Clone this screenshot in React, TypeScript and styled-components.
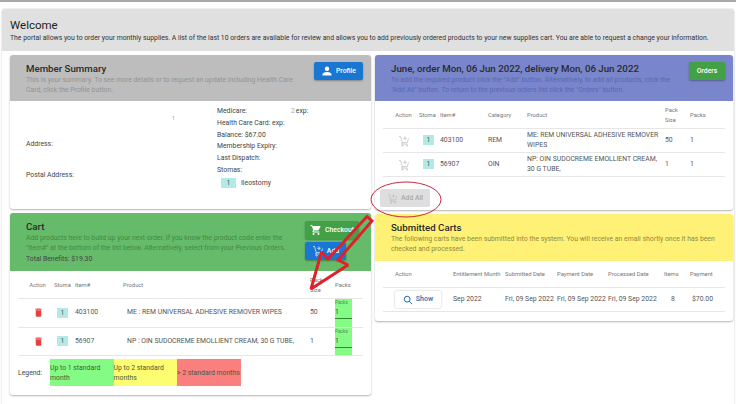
import React from "react";
import styled, { createGlobalStyle } from "styled-components";

const Global = createGlobalStyle`
  html, body { margin: 0; padding: 0; background: #fff; overflow: hidden; }
  body { font-family: Roboto, "Liberation Sans", sans-serif; color: rgba(0,0,0,.8); }
  * { box-sizing: border-box; }
`;

const Page = styled.div`
  position: relative;
  width: 736px;
  height: 404px;
  overflow: hidden;
  border-top: 2px solid #a8a8a8;
  padding: 7px 2px 0;
`;
const Shell = styled.div`
  border-radius: 3px;
  box-shadow: 0 0 2px rgba(0,0,0,.25);
  height: 400px;
`;
const Banner = styled.div`
  background: #e0e0e0;
  height: 42px;
  padding: 10px 8px 0;
  border-radius: 3px 3px 0 0;
`;
const PageTitle = styled.div`
  font-size: 11.5px;
  line-height: 13px;
  color: #222;
`;
const PageText = styled.div`
  font-size: 6.83px;
  line-height: 9px;
  margin-top: 2px;
  white-space: nowrap;
  color: #333;
`;
const Columns = styled.div`
  display: grid;
  grid-template-columns: 361px 358px;
  gap: 4px;
  padding: 4px 0 0 8px;
  align-items: start;
`;
const Stack = styled.div`
  display: flex;
  flex-direction: column;
  gap: 4px;
`;
const Card = styled.section<{ $h: number }>`
  height: ${p => p.$h}px;
  background: #fff;
  border-radius: 3px;
  box-shadow: 0 1px 2px rgba(0,0,0,.3);
`;
const CardHead = styled.header<{ $bg: string; $h: number }>`
  background: ${p => p.$bg};
  height: ${p => p.$h}px;
  border-radius: 3px 3px 0 0;
  padding: 7px 8px 0 16px;
  display: flex;
  justify-content: space-between;
  align-items: flex-start;
`;
const HeadText = styled.div<{ $w: number }>`
  width: ${p => p.$w}px;
`;
const CardTitle = styled.h2`
  margin: 0;
  font-size: 9.7px;
  line-height: 13px;
  font-weight: 500;
  color: #2a2a2a;
  white-space: nowrap;
`;
const CardSub = styled.p<{ $c: string }>`
  margin: 0;
  font-size: 6.85px;
  line-height: 10px;
  color: ${p => p.$c};
`;
const Benefits = styled.p`
  margin: 1px 0 0;
  font-size: 6.85px;
  line-height: 10px;
  color: #444;
`;
const HeadButtons = styled.div`
  display: flex;
  flex-direction: column;
  gap: 3px;
  margin: 1px 4px 0 0;
`;
const Btn = styled.div<{ $bg: string; $w: number }>`
  background: ${p => p.$bg};
  width: ${p => p.$w}px;
  height: 18px;
  border-radius: 2px;
  box-shadow: 0 1px 2px rgba(0,0,0,.3);
  color: #fff;
  font-size: 6.85px;
  font-weight: 500;
  display: flex;
  align-items: center;
  justify-content: center;
  gap: 3px;
`;
const Summary = styled.div`
  display: grid;
  grid-template-columns: 191px 1fr;
  padding: 5px 16px 0;
  font-size: 6.85px;
  color: #444;
`;
const AddressCol = styled.div`
  position: relative;
  padding-top: 34px;
  display: flex;
  flex-direction: column;
  gap: 23px;
`;
const StrayMark = styled.span`
  position: absolute;
  left: 146px;
  top: 9px;
  color: #999;
  font-size: 5px;
`;
const InfoCol = styled.div`
  display: flex;
  flex-direction: column;
`;
const InfoLine = styled.div`
  line-height: 11.8px;
  display: flex;
`;
const ExpGap = styled.span`
  margin-left: 44px;
`;
const Faint = styled.span`
  color: #aaa;
  margin-right: 1px;
`;
const StomaRow = styled.div`
  display: flex;
  align-items: center;
  gap: 5px;
  padding-left: 4px;
  line-height: 12px;
`;
const StomaTag = styled.span<{ $w: number; $ml?: number }>`
  display: inline-block;
  background: #b2ebe6;
  width: ${p => p.$w}px;
  margin-left: ${p => p.$ml ?? 0}px;
  height: 10px;
  line-height: 10px;
  text-align: center;
  font-size: 6.85px;
  color: #555;
`;
const Table = styled.div`
  padding: 0 8px;
`;
const Row = styled.div<{ $cols: string; $h: number }>`
  display: grid;
  grid-template-columns: ${p => p.$cols};
  height: ${p => p.$h}px;
  align-items: center;
  border-bottom: 1px solid #e6e6e6;
  font-size: 6.85px;
  line-height: 9.5px;
  color: #555;
`;
const HeadRow = styled(Row)`
  font-size: 5.8px;
  line-height: 10px;
  color: #777;
`;
const Centre = styled.div<{ $pl: number }>`
  display: flex;
  justify-content: center;
  padding-left: ${p => p.$pl}px;
`;
const Narrow = styled.div`
  width: min-content;
`;
const Inset = styled.div<{ $pl: number }>`
  padding-left: ${p => p.$pl}px;
`;
const AddAllWrap = styled.div`
  padding: 12px 5px 0;
`;
const AddAll = styled.div`
  width: 50px;
  height: 18px;
  background: #dedede;
  border-radius: 2px;
  color: #a8a8a8;
  font-size: 6.85px;
  font-weight: 500;
  display: flex;
  align-items: center;
  justify-content: center;
  gap: 3px;
`;
const Packs = styled.div`
  background: #84fb84;
  width: 17px;
  height: 100%;
  font-size: 4.8px;
  line-height: 7px;
  color: #5a8a5a;
`;
const PacksValue = styled.div`
  font-size: 6.85px;
  line-height: 10px;
  height: 12px;
  color: #444;
  border-bottom: 1px solid #2d8a2d;
  margin-top: 1px;
`;
const Legend = styled.div`
  display: flex;
  align-items: center;
  padding: 3px 0 0 8px;
  font-size: 6.85px;
  color: #444;
`;
const LegendLabel = styled.div`
  width: 24px;
  margin-right: 8px;
`;
const LegendCell = styled.div<{ $bg: string }>`
  width: 63.5px;
  height: 27px;
  background: ${p => p.$bg};
  line-height: 10px;
  display: flex;
  align-items: center;
  color: #4a5a3a;
`;
const ShowBtn = styled.div`
  width: 46px;
  height: 17px;
  border-radius: 2px;
  box-shadow: 0 0 2px rgba(0,0,0,.3);
  color: #1f6fb5;
  font-size: 7px;
  font-weight: 500;
  display: flex;
  align-items: center;
  justify-content: center;
  gap: 3px;
  margin-left: 12px;
`;
const Overlay = styled.svg`
  position: absolute;
  inset: 0;
  pointer-events: none;
`;

const CartIcon = ({ s, c, plus }: { s: number; c: string; plus?: boolean }) => (
  <svg width={s} height={s} viewBox="0 0 24 24" fill={plus ? "none" : c} stroke={plus ? c : "none"} strokeWidth={plus ? 1.3 : 0}>
    {plus ? (
      <>
        <path d="M2 3h3l3.5 12h10l2.5-8" />
        <path d="M8.5 15l-1.5 3h12" />
        <circle cx="9" cy="21" r="1.4" />
        <circle cx="18" cy="21" r="1.4" />
        <path d="M14 3v7M10.5 6.5h7" />
      </>
    ) : (
      <path d="M7 18a2 2 0 1 0 0 4 2 2 0 0 0 0-4zM1 2v2h2l3.6 7.6L5.2 14c-.1.3-.2.7-.2 1 0 1.1.9 2 2 2h12v-2H7.4c-.1 0-.2-.1-.2-.2l.9-1.8h7.4c.8 0 1.4-.4 1.8-1l3.6-6.5c.1-.2.1-.3.1-.5 0-.6-.4-1-1-1H5.2l-.9-2H1zm16 16a2 2 0 1 0 0 4 2 2 0 0 0 0-4z" />
    )}
  </svg>
);
const Trash = () => (
  <svg width="11" height="11" viewBox="0 0 24 24" fill="#e8403a">
    <path d="M6 19c0 1.1.9 2 2 2h8c1.1 0 2-.9 2-2V7H6v12zM19 4h-3.5l-1-1h-5l-1 1H5v2h14V4z" />
  </svg>
);
const Person = () => (
  <svg width="12" height="12" viewBox="0 0 24 24" fill="#fff">
    <path d="M12 12a4.5 4.5 0 1 0 0-9 4.5 4.5 0 0 0 0 9zm0 2c-3 0-9 1.5-9 4.5V21h18v-2.5c0-3-6-4.5-9-4.5z" />
  </svg>
);
const Search = () => (
  <svg width="10" height="10" viewBox="0 0 24 24" fill="none" stroke="#1f6fb5" strokeWidth="2.4">
    <circle cx="10" cy="10" r="7" />
    <path d="M15 15l7 7" />
  </svg>
);

const orderCols = "36px 21px 48px 39px 138px 25px 1fr";
const cartCols = "36px 21px 48px 187px 25px 1fr";
const subCols = "70px 52px 52px 51px 56px 26px 1fr";

const orderRows = [
  ["403100", "REM", "ME: REM UNIVERSAL ADHESIVE REMOVER WIPES", "50"],
  ["56907", "OIN", "NP: OIN SUDOCREME EMOLLIENT CREAM, 30 G TUBE,", "1"],
];
const cartRows = [
  ["403100", "ME : REM UNIVERSAL ADHESIVE REMOVER WIPES", "50"],
  ["56907", "NP : OIN SUDOCREME EMOLLIENT CREAM, 30 G TUBE,", "1"],
];

export default function App() {
  return (
    <Page>
      <Global />
      <Shell>
        <Banner>
          <PageTitle>Welcome</PageTitle>
          <PageText>
            The portal allows you to order your monthly supplies. A list of the last 10 orders are available for review and allows you to add previously ordered products to your new supplies cart. You are able to request a change your information.
          </PageText>
        </Banner>
        <Columns>
          <Stack>
            <Card $h={154}>
              <CardHead $bg="#bdbdbd" $h={46}>
                <HeadText $w={280}>
                  <CardTitle>Member Summary</CardTitle>
                  <CardSub $c="#939393">This is your summary. To see more details or to request an update including Health Care Card, click the Profile button.</CardSub>
                </HeadText>
                <Btn $bg="#1976d2" $w={49}><Person />Profile</Btn>
              </CardHead>
              <Summary>
                <AddressCol>
                  <StrayMark>1</StrayMark>
                  <div>Address:</div>
                  <div>Postal Address:</div>
                </AddressCol>
                <InfoCol>
                  <InfoLine>Medicare:<ExpGap><Faint>2</Faint>exp:</ExpGap></InfoLine>
                  <InfoLine>Health Care Card: exp:</InfoLine>
                  <InfoLine>Balance: $67.00</InfoLine>
                  <InfoLine>Membership Expiry:</InfoLine>
                  <InfoLine>Last Dispatch:</InfoLine>
                  <InfoLine>Stomas:</InfoLine>
                  <StomaRow><StomaTag $w={15}>1</StomaTag>Ileostomy</StomaRow>
                </InfoCol>
              </Summary>
            </Card>
            <Card $h={182}>
              <CardHead $bg="#66bb6a" $h={58}>
                <HeadText $w={280}>
                  <CardTitle>Cart</CardTitle>
                  <CardSub $c="#3f8a45">Add products here to build up your next order. If you know the product code enter the "Item#" at the bottom of the list below. Alternatively, select from your Previous Orders.</CardSub>
                  <Benefits>Total Benefits: $19.30</Benefits>
                </HeadText>
                <HeadButtons>
                  <Btn $bg="#43a047" $w={54}><CartIcon s={12} c="#fff" />Checkout</Btn>
                  <Btn $bg="#1976d2" $w={41}><CartIcon s={12} c="#fff" plus />Add</Btn>
                </HeadButtons>
              </CardHead>
              <Table>
                <HeadRow $cols={cartCols} $h={28}>
                  <Centre $pl={3}>Action</Centre><div>Stoma</div><div>Item#</div><div>Product</div><Narrow>Pack Size</Narrow><div>Packs</div>
                </HeadRow>
                {cartRows.map(r => (
                  <Row key={r[0]} $cols={cartCols} $h={28.5}>
                    <Centre $pl={4}><Trash /></Centre>
                    <div><StomaTag $w={11} $ml={3}>1</StomaTag></div>
                    <div>{r[0]}</div>
                    <Inset $pl={4}>{r[1]}</Inset>
                    <div>{r[2]}</div>
                    <Packs>Packs<PacksValue>1</PacksValue></Packs>
                  </Row>
                ))}
              </Table>
              <Legend>
                <LegendLabel>Legend:</LegendLabel>
                <LegendCell $bg="#84fb84">Up to 1 standard month</LegendCell>
                <LegendCell $bg="#fdfd72">Up to 2 standard months</LegendCell>
                <LegendCell $bg="#fb7f7f">&gt; 2 standard months</LegendCell>
              </Legend>
            </Card>
          </Stack>
          <Stack>
            <Card $h={155}>
              <CardHead $bg="#7986cb" $h={46}>
                <HeadText $w={285}>
                  <CardTitle>June, order Mon, 06 Jun 2022, delivery Mon, 06 Jun 2022</CardTitle>
                  <CardSub $c="#5a68b0">To add the required product click the "Add" button. Alternatively, to add all products, click the "Add All" button. To return to the previous orders list click the "Orders" button.</CardSub>
                </HeadText>
                <Btn $bg="#43a047" $w={36}>Orders</Btn>
              </CardHead>
              <Table>
                <HeadRow $cols={orderCols} $h={28}>
                  <Centre $pl={5}>Action</Centre><div>Stoma</div><div>Item#</div><div>Category</div><div>Product</div><Narrow>Pack Size</Narrow><div>Packs</div>
                </HeadRow>
                {orderRows.map(r => (
                  <Row key={r[0]} $cols={orderCols} $h={24}>
                    <Centre $pl={5}><CartIcon s={12} c="#b5b5b5" plus /></Centre>
                    <div><StomaTag $w={11} $ml={4}>1</StomaTag></div>
                    <div>{r[0]}</div>
                    <div>{r[1]}</div>
                    <div>{r[2]}</div>
                    <div>{r[3]}</div>
                    <div>1</div>
                  </Row>
                ))}
              </Table>
              <AddAllWrap>
                <AddAll><CartIcon s={11} c="#b5b5b5" plus />Add All</AddAll>
              </AddAllWrap>
            </Card>
            <Card $h={107}>
              <CardHead $bg="#fff176" $h={47}>
                <HeadText $w={335}>
                  <CardTitle>Submitted Carts</CardTitle>
                  <CardSub $c="#8f8a3c">The following carts have been submitted into the system. You will receive an email shortly once it has been checked and processed.</CardSub>
                </HeadText>
              </CardHead>
              <Table>
                <HeadRow $cols={subCols} $h={27}>
                  <Inset $pl={12}>Action</Inset><div>Entitlement Month</div><div>Submitted Date</div><div>Payment Date</div><div>Processed Date</div><div>Items</div><div>Payment</div>
                </HeadRow>
                <Row $cols={subCols} $h={24}>
                  <ShowBtn><Search />Show</ShowBtn>
                  <div>Sep 2022</div>
                  <div>Fri, 09 Sep 2022</div>
                  <div>Fri, 09 Sep 2022</div>
                  <div>Fri, 09 Sep 2022</div>
                  <Inset $pl={7}>8</Inset>
                  <Inset $pl={2}>$70.00</Inset>
                </Row>
              </Table>
            </Card>
          </Stack>
        </Columns>
      </Shell>
      <Overlay width="736" height="404" viewBox="0 0 736 404">
        <ellipse cx="406" cy="197.5" rx="35" ry="17.5" fill="none" stroke="#c8283c" strokeWidth="1" />
        <path d="M311 287 L321.5 250 L328 257 L367 214.5 L372 219 L338 258 L348 263 Z" fill="none" stroke="#e0202a" strokeWidth="3" strokeLinejoin="miter" strokeMiterlimit={2} />
      </Overlay>
    </Page>
  );
}
